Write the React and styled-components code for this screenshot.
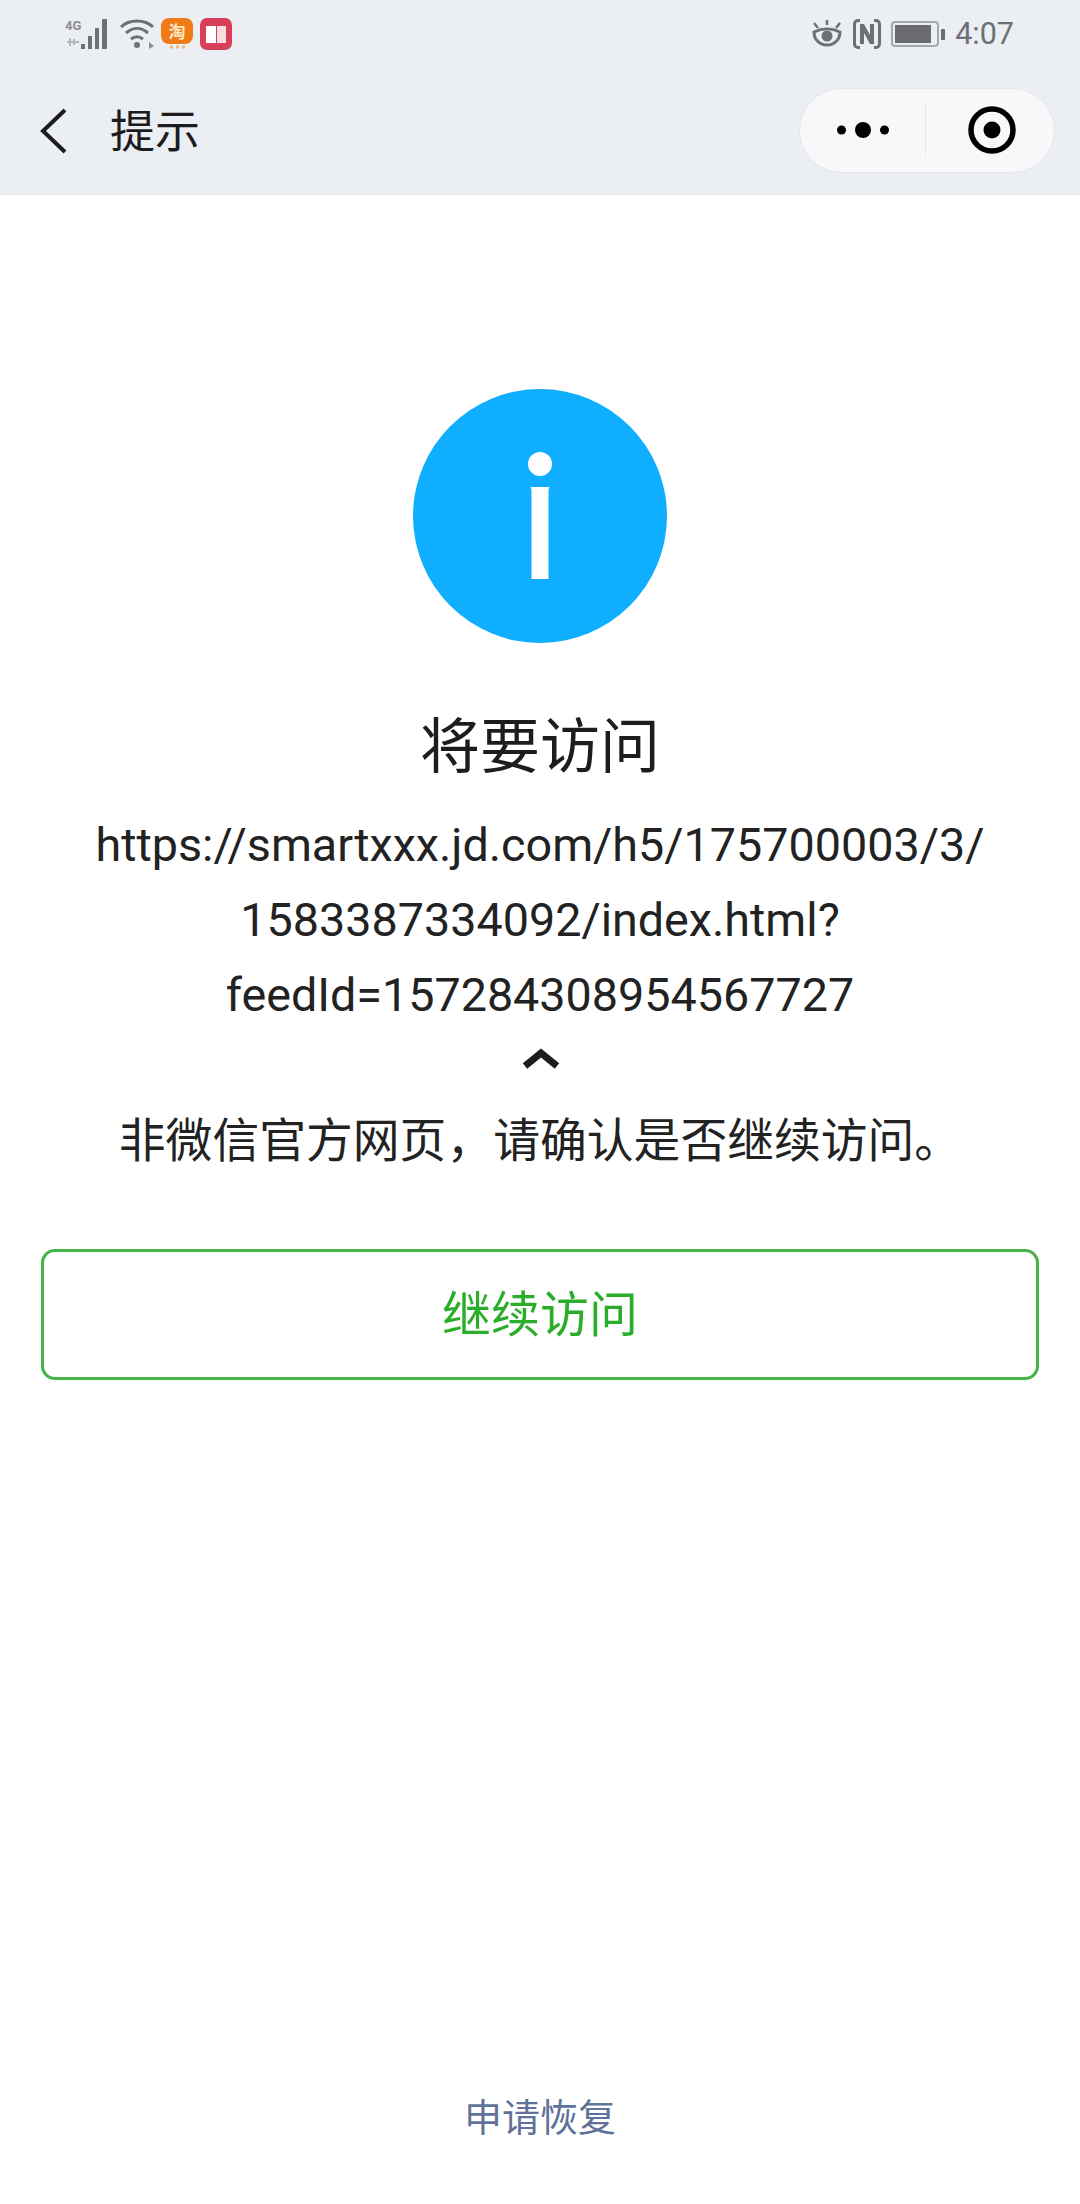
import React from "react";
import styled, { createGlobalStyle } from "styled-components";

const GlobalStyle = createGlobalStyle`
  html, body {
    margin: 0;
    padding: 0;
    background: #ffffff;
  }
  body {
    font-family: Roboto, "Noto Sans CJK SC", sans-serif;
  }
`;

const Page = styled.div`
  width: 1080px;
  height: 2204px;
  display: flex;
  flex-direction: column;
  overflow: hidden;
  background: #fff;
`;

const Header = styled.div`
  height: 195px;
  flex: none;
  background: #ebeef2;
  border-bottom: 1px solid #e6e8ea;
  box-sizing: border-box;
`;

const StatusBar = styled.div`
  height: 66px;
  display: flex;
  align-items: center;
  justify-content: space-between;
  padding: 2px 66px 0 65px;
  box-sizing: border-box;
`;

const StatusGroup = styled.div`
  display: flex;
  align-items: center;
  gap: ${(p) => p.$gap || 7}px;
`;

const Clock = styled.span`
  font-size: 30.500px;
  color: #6e7073;
  line-height: 1;
`;

const NavBar = styled.div`
  height: 128px;
  display: flex;
  align-items: center;
  padding: 0 25px 0 40px;
`;

const BackWrap = styled.div`
  display: flex;
  padding-top: 2px;
`;

const NavTitle = styled.div`
  font-size: 45px;
  color: #1c1c1c;
  margin-left: 42px;
  padding-top: 5px;
  line-height: 1;
  flex: 1;
`;

const Capsule = styled.div`
  width: 256px;
  height: 85px;
  box-sizing: border-box;
  border-radius: 43px;
  background: #f8f8fa;
  border: 1px solid #e6e6ea;
  display: flex;
  align-items: center;
`;

const CapsuleHalf = styled.div`
  flex: 1;
  height: 52px;
  display: flex;
  align-items: center;
  justify-content: center;
  & + & {
    border-left: 1px solid #e8e8ea;
    padding-left: 3px;
  }
`;

const Body = styled.div`
  flex: 1;
  display: flex;
  flex-direction: column;
  align-items: center;
  padding: 194px 41px 0;
`;

const Title = styled.h1`
  margin: 63px 0 0;
  font-size: 60px;
  font-weight: 400;
  line-height: 84px;
  color: #1d1d1d;
`;

const Url = styled.div`
  margin-top: 18px;
  width: 960px;
  text-align: center;
  font-size: 46.700px;
  line-height: 75px;
  color: #222222;
  word-break: break-all;
`;

const Toggle = styled.div`
  margin-top: 4px;
  padding-left: 2px;
  height: 44px;
  display: flex;
  align-items: center;
`;

const Warning = styled.div`
  margin-top: 27px;
  font-size: 46.800px;
  line-height: 66px;
  color: #222222;
`;

const ContinueButton = styled.button`
  margin-top: 75px;
  width: 998px;
  height: 131px;
  background: #fff;
  border: 3px solid #45b345;
  border-radius: 14px;
  font-family: inherit;
  font-size: 49px;
  color: #2aae2a;
  padding: 0 0 8px;
`;

const Footer = styled.a`
  margin-top: auto;
  margin-bottom: 62px;
  font-size: 38px;
  line-height: 48px;
  color: #5f7299;
`;

const SignalIcon = () => (
  <svg width="48" height="32" viewBox="0 0 48 32">
    <text x="0" y="12" fontSize="13" fontWeight="700" fontFamily="Roboto" fill="#8a8c8f">4G</text>
    <path d="M2 24h12M5 20v8M9 21v6" stroke="#b5b7ba" strokeWidth="2" fill="none" />
    <rect x="16" y="26" width="4" height="5" fill="#6e7073" />
    <rect x="23" y="18" width="4" height="13" fill="#6e7073" />
    <rect x="30" y="10" width="4" height="21" fill="#6e7073" />
    <rect x="37" y="1" width="5" height="30" fill="#6e7073" />
  </svg>
);

const WifiIcon = () => (
  <svg width="34" height="30" viewBox="0 0 34 30" fill="none" stroke="#6e7073" strokeWidth="3">
    <path d="M1 8C9 0 25 0 33 8" />
    <path d="M6 14c7-6 15-6 22 0" />
    <path d="M11 20c4-3 8-3 12 0" />
    <circle cx="17" cy="26" r="3" fill="#6e7073" stroke="none" />
    <path d="M29 23l5 4-5 3z" fill="#8a8c8f" stroke="none" />
  </svg>
);

const TaobaoIcon = () => (
  <svg width="32" height="32" viewBox="0 0 32 32">
    <rect x="0" y="0" width="32" height="26" rx="8" fill="#f07a16" />
    <path d="M9 29h3M15 29h3M21 29h3" stroke="#f5b27a" strokeWidth="3" />
    <text x="16" y="20" fontSize="17" fontWeight="700" fontFamily="Noto Sans CJK SC" textAnchor="middle" fill="#ffe8c4">淘</text>
  </svg>
);

const BookIcon = () => (
  <svg width="32" height="32" viewBox="0 0 32 32">
    <rect width="32" height="32" rx="7" fill="#d8405a" />
    <path d="M6 8h10v17H6z" fill="#fff" />
    <path d="M17 8h9v17h-9z" fill="#f8dde0" />
  </svg>
);

const EyeIcon = () => (
  <svg width="32" height="28" viewBox="0 0 32 28" fill="none" stroke="#6e7073" strokeWidth="3">
    <path d="M3 12c8-4 18-4 26 0 0 8-6 13-13 13S3 20 3 12z" />
    <circle cx="16" cy="16" r="5.500" fill="#6e7073" stroke="none" />
    <path d="M3 3l4 5M16 0v5M29 3l-4 5" strokeWidth="2.500" />
  </svg>
);

const NfcIcon = () => (
  <svg width="28" height="30" viewBox="0 0 28 30">
    <path d="M7 1.500H5a3.500 3.500 0 0 0-3.500 3.500v20A3.500 3.500 0 0 0 5 28.500h2M21 1.500h2a3.500 3.500 0 0 1 3.500 3.500v20a3.500 3.500 0 0 1-3.500 3.500h-2" fill="none" stroke="#6e7073" strokeWidth="3" />
    <path d="M7 5h4l6 11V5h4v20h-4L11 14v11H7z" fill="#6e7073" />
  </svg>
);

const BatteryIcon = () => (
  <svg width="54" height="26" viewBox="0 0 54 26">
    <rect x="1" y="1" width="46" height="24" rx="3" fill="none" stroke="#a5a7aa" strokeWidth="2" />
    <rect x="4" y="4" width="36" height="18" fill="#6a6c6f" />
    <rect x="50" y="8" width="4" height="11" rx="1" fill="#6a6c6f" />
  </svg>
);

const BackIcon = () => (
  <svg width="28" height="46" viewBox="0 0 28 46" fill="none" stroke="#1c1c1c" strokeWidth="4">
    <path d="M25 2L3 23l22 21" />
  </svg>
);

const MoreIcon = () => (
  <svg width="52" height="18" viewBox="0 0 52 18" fill="#000">
    <circle cx="4.500" cy="9" r="4.500" />
    <circle cx="26" cy="9" r="8" />
    <circle cx="47.500" cy="9" r="4.500" />
  </svg>
);

const CloseIcon = () => (
  <svg width="48" height="48" viewBox="0 0 48 48">
    <circle cx="24" cy="24" r="21" fill="none" stroke="#000" strokeWidth="5.500" />
    <circle cx="24" cy="24" r="8.500" fill="#000" />
  </svg>
);

const InfoIcon = () => (
  <svg width="254" height="254" viewBox="0 0 254 254">
    <circle cx="127" cy="127" r="127" fill="#10aeff" />
    <circle cx="127" cy="75" r="12" fill="#fff" />
    <path d="M117.500 98h19l-1 3v89h-17v-89z" fill="#fff" />
  </svg>
);

const ChevronIcon = () => (
  <svg width="38" height="22" viewBox="0 0 38 22" fill="none" stroke="#1d1d1d" strokeWidth="7">
    <path d="M3 18L19 5l16 13" />
  </svg>
);

export default function App() {
  return (
    <>
      <GlobalStyle />
      <Page>
        <Header>
          <StatusBar>
            <StatusGroup>
              <SignalIcon />
              <WifiIcon />
              <TaobaoIcon />
              <BookIcon />
            </StatusGroup>
            <StatusGroup $gap={10}>
              <EyeIcon />
              <NfcIcon />
              <BatteryIcon />
              <Clock>4:07</Clock>
            </StatusGroup>
          </StatusBar>
          <NavBar>
            <BackWrap>
              <BackIcon />
            </BackWrap>
            <NavTitle>提示</NavTitle>
            <Capsule>
              <CapsuleHalf>
                <MoreIcon />
              </CapsuleHalf>
              <CapsuleHalf>
                <CloseIcon />
              </CapsuleHalf>
            </Capsule>
          </NavBar>
        </Header>
        <Body>
          <InfoIcon />
          <Title>将要访问</Title>
          <Url>
            https://smartxxx.jd.com/h5/175700003/3/
            <br />
            1583387334092/index.html?
            <br />
            feedId=157284308954567727
          </Url>
          <Toggle>
            <ChevronIcon />
          </Toggle>
          <Warning>非微信官方网页，请确认是否继续访问。</Warning>
          <ContinueButton>继续访问</ContinueButton>
          <Footer>申请恢复</Footer>
        </Body>
      </Page>
    </>
  );
}
